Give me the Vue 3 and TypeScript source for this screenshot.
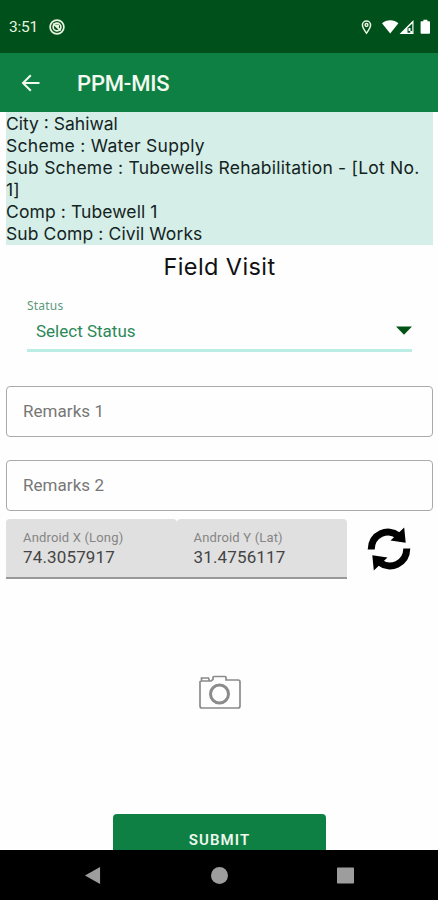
<script setup lang="ts">
import { ref } from 'vue'

interface Detail {
  id: string
  text: string
}

const details: Detail[] = [
  { id: 'city', text: 'City : Sahiwal' },
  { id: 'scheme', text: 'Scheme : Water Supply' },
  { id: 'sub-scheme', text: 'Sub Scheme : Tubewells Rehabilitation - [Lot No. 1]' },
  { id: 'comp', text: 'Comp : Tubewell 1' },
  { id: 'sub-comp', text: 'Sub Comp : Civil Works' },
]

const remarks = ref<string[]>(['', ''])

const coordinates = [
  { label: 'Android X (Long)', value: '74.3057917' },
  { label: 'Android Y (Lat)', value: '31.4756117' },
]
</script>

<template>
  <div class="screen">
    <div class="status-bar">
      <span class="clock">3:51</span>
      <svg class="app-mark" viewBox="0 0 16 16">
        <circle cx="8" cy="8" r="6.9" />
        <circle cx="8" cy="8" r="3.9" />
        <path d="M4.2 4.7 11.7 11.5M6.8 6.3h2.4v2" />
      </svg>
      <svg class="system-icons" viewBox="0 0 70 16">
        <path class="line" d="M5.5 14.2C3.5 11.2 1.4 8.8 1.4 6.1a4.1 4.1 0 0 1 8.2 0c0 2.7-2.1 5.1-4.1 8.1Z" />
        <circle class="line" cx="5.5" cy="6" r="1.4" />
        <path d="M21 4.2c4.5-4.1 12-4.1 16.400 0L29.200 14.500Z" />
        <path fill-rule="evenodd" d="M38.500 15 52.500 1v14Zm8-1.200h4.800V4.400L46.500 9Z" />
        <path d="M47.500 9h2v3h-2zM49.300 12h2v2.500h-2z" />
        <path d="M60.400 2.200h2V.800h4v1.400h1.800q.8 0 .8.800V14q0 .8-.8.800h-7.800q-.8 0-.8-.8V3q0-.8.8-.8Z" />
      </svg>
    </div>

    <header class="app-bar">
      <button class="back" aria-label="Back">
        <svg viewBox="0 0 20 18"><path d="M18.500 9H2M9.800 1.200 2 9l7.800 7.800" /></svg>
      </button>
      <h1>PPM-MIS</h1>
    </header>

    <main class="content">
      <section class="details">
        <p v-for="item in details" :key="item.id" :class="item.id">{{ item.text }}</p>
      </section>

      <h2>Field Visit</h2>

      <div class="status-field">
        <span class="status-label">Status</span>
        <div class="status-select">
          <span>Select Status</span>
          <svg viewBox="0 0 16 9"><path d="M0 .5h16L8 8.700Z" /></svg>
        </div>
      </div>

      <input v-for="(_, i) in remarks" :key="i" v-model="remarks[i]" class="remark" :placeholder="`Remarks ${i + 1}`" />

      <div class="location-row">
        <div v-for="c in coordinates" :key="c.label" class="coordinate">
          <span class="coordinate-label">{{ c.label }}</span>
          <span class="coordinate-value">{{ c.value }}</span>
        </div>
        <button class="refresh" aria-label="Refresh location">
          <svg viewBox="0 0 44 44">
            <path class="arc" d="M4.200 22.500C4.500 7 21 .500 31 8.500M39.800 21.500C39.500 37 23 43.500 13 35.500" />
            <path d="M37.200.500 38.700 15.800 23.500 13.400ZM6.800 43.500 5.300 28.200 20.500 30.600Z" />
          </svg>
        </button>
      </div>

      <button class="camera" aria-label="Take photo">
        <svg viewBox="0 0 42 36">
          <path d="M3 6H12l2-1.500V2.500q0-1 1-1H26q1 0 1 1V5h12q2 0 2 2v24q0 2-2 2H3q-2 0-2-2V7q0-1 2-1ZM2.500 6V3h7l1 3" />
          <circle cx="20.500" cy="19" r="9" />
        </svg>
      </button>

      <button class="submit">SUBMIT</button>
    </main>

    <nav class="nav-bar">
      <svg viewBox="0 0 16 18"><path d="M16 0v18L0 9Z" /></svg>
      <svg viewBox="0 0 16 16"><circle cx="8" cy="8" r="8" /></svg>
      <svg viewBox="0 0 17 16"><rect width="17" height="16" rx=".7" /></svg>
    </nav>
  </div>
</template>

<style>
body {
  margin: 0;
  background: #fff;
}
</style>

<style scoped>
.screen {
  box-sizing: border-box;
  width: 438px;
  height: 900px;
  display: flex;
  flex-direction: column;
  overflow: hidden;
  background: #fefefe;
  font-family: Roboto, sans-serif;
}
button {
  padding: 0;
  border: 0;
  background: none;
  font-family: inherit;
}
svg {
  display: block;
}
.status-bar {
  flex: none;
  height: 53px;
  display: flex;
  align-items: center;
  padding: 0 7px 0 9px;
  box-sizing: border-box;
  background: #00501b;
  color: #e9f4df;
}
.clock {
  width: 40px;
  padding-top: 1px;
  font-size: 15.500px;
  font-weight: 400;
  line-height: 18px;
  letter-spacing: -.2px;
}
.app-mark {
  width: 16px;
  height: 16px;
  fill: none;
  stroke: #e9f4df;
  stroke-width: 1.700;
}
.system-icons {
  width: 70px;
  height: 16px;
  margin-left: auto;
  fill: #fff;
}
.system-icons .line {
  fill: none;
  stroke: #e9f4df;
  stroke-width: 1.500;
}
.app-bar {
  flex: none;
  height: 59px;
  display: flex;
  align-items: center;
  padding-left: 21px;
  background: #0e8044;
}
.back {
  width: 56px;
}
.back svg {
  width: 20px;
  height: 18px;
  fill: none;
  stroke: #f3faef;
  stroke-width: 2;
}
h1 {
  margin: 2px 0 0;
  color: #f3faef;
  font-size: 22px;
  font-weight: 500;
  line-height: 28px;
  letter-spacing: -.15px;
}
.content {
  flex: 1;
  min-height: 0;
  overflow: hidden;
  display: flex;
  flex-direction: column;
  padding: 0 5px 0 6px;
}
.details {
  flex: none;
  box-sizing: border-box;
  height: 133px;
  padding-top: 1px;
  background: #d5eee7;
  color: #14231f;
  font-family: Inter, sans-serif;
  font-size: 17.500px;
  line-height: 22px;
}
.details p {
  margin: 0;
}
.details .scheme {
  letter-spacing: .29px;
}
.details .sub-scheme {
  letter-spacing: .23px;
}
.details .comp,
.details .sub-comp {
  letter-spacing: .1px;
}
h2 {
  flex: none;
  margin: 8px 0 0;
  color: #111;
  font-family: Inter, sans-serif;
  font-size: 23.500px;
  font-weight: 400;
  line-height: 28px;
  letter-spacing: .4px;
  text-align: center;
}
.status-field {
  flex: none;
  height: 54px;
  margin: 17px 21px 34px;
  border-bottom: 3px solid #baeee5;
  box-sizing: border-box;
}
.status-label {
  display: block;
  color: #5c9a7b;
  font-family: 'Noto Sans', sans-serif;
  font-size: 12px;
  line-height: 15px;
  letter-spacing: .2px;
}
.status-select {
  display: flex;
  align-items: center;
  justify-content: space-between;
  height: 35px;
  padding-left: 9px;
  color: #2c8858;
  font-size: 17px;
  line-height: 22px;
}
.status-select svg {
  width: 16px;
  height: 9px;
  fill: #005314;
}
.remark {
  flex: none;
  box-sizing: border-box;
  width: 427px;
  height: 51px;
  margin: 0 0 23px;
  padding: 0 16px 2px;
  border: 1.500px solid #aaa;
  border-radius: 4px;
  background: transparent;
  color: #444;
  font-family: Roboto, sans-serif;
  font-size: 17px;
  letter-spacing: .05px;
  outline: none;
}
.remark::placeholder {
  color: #777;
  opacity: 1;
}
.remark + .remark {
  margin-bottom: 8px;
}
.location-row {
  flex: none;
  display: flex;
  height: 60px;
}
.coordinate {
  box-sizing: border-box;
  width: 170.500px;
  height: 60px;
  padding: 11px 0 0 17px;
  display: flex;
  flex-direction: column;
  border-bottom: 2px solid #999;
  border-radius: 4px 4px 0 0;
  background: #e0e0e0;
}
.coordinate-label {
  color: #858585;
  font-size: 13px;
  line-height: 15px;
  letter-spacing: .17px;
}
.coordinate-value {
  color: #444;
  font-size: 17px;
  line-height: 24px;
  letter-spacing: .15px;
}
.refresh {
  align-self: center;
  width: 44px;
  height: 44px;
  margin-left: 20px;
}
.refresh svg {
  width: 44px;
  height: 44px;
}
.arc {
  fill: none;
  stroke: #000;
  stroke-width: 7;
}
.camera {
  flex: none;
  align-self: center;
  margin-top: 96px;
}
.camera svg {
  width: 42px;
  height: 36px;
  fill: none;
  stroke: #8b8b8b;
  stroke-width: 1.700;
}
.camera circle {
  stroke-width: 3;
}
.submit {
  flex: none;
  align-self: center;
  width: 213px;
  height: 51px;
  margin-top: 103px;
  border-radius: 4px;
  background: #0e8044;
  color: #eef8ed;
  font-size: 15px;
  font-weight: 600;
  letter-spacing: 1.100px;
}
.nav-bar {
  flex: none;
  height: 50px;
  display: flex;
  align-items: center;
  justify-content: space-between;
  box-sizing: border-box;
  padding: 0 84px;
  background: #000;
}
.nav-bar svg {
  height: 17px;
  width: 17px;
  fill: #9d9d9d;
}
</style>
